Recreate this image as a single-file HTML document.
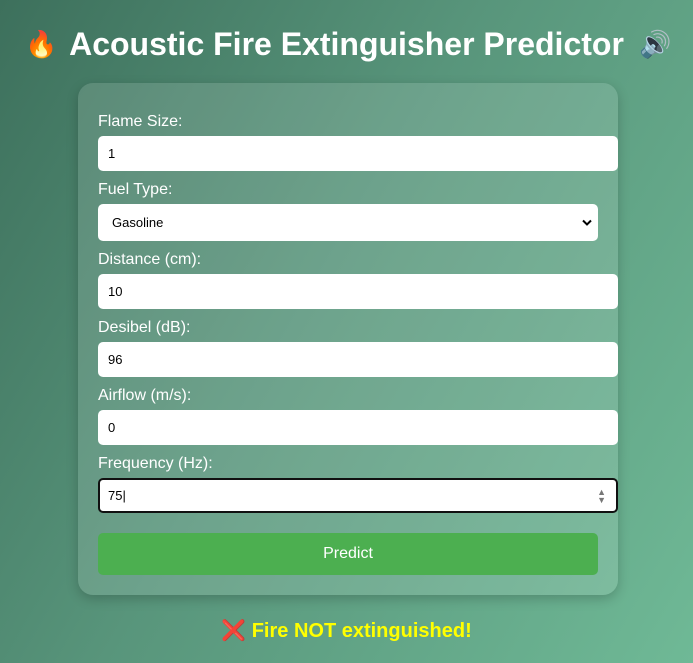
<!DOCTYPE html>
<html><head><style>
html,body{margin:0;height:663px;overflow:hidden}
body{width:693px;background:linear-gradient(120deg,#3d705c 0%,#58957b 45%,#6fb996 100%);font-family:"Liberation Sans",sans-serif;position:relative}
h1{position:absolute;top:25px;left:0;width:693px;text-align:center;margin:0;font-size:32px;color:#fff;font-weight:bold;line-height:38px;white-space:nowrap}
.emo{position:absolute;top:27px;font-size:26px;line-height:34px}
.card{position:absolute;left:78px;top:83px;width:540px;height:512px;background:rgba(255,255,255,0.13);border-radius:15px;box-shadow:0 4px 12px rgba(0,0,0,0.2)}
label{position:absolute;left:20px;color:#fff;font-size:16px}
.in{position:absolute;left:20px;width:520px;height:35px;background:#fff;border-radius:5px;box-sizing:border-box;font-size:13px;line-height:35px;padding-left:10px;color:#000}
.btn{position:absolute;left:20px;top:450px;width:500px;height:42px;background:#4caf50;border-radius:5px;color:#fff;font-size:16px;text-align:center;line-height:42px}
.res{position:absolute;top:618px;left:0;width:693px;text-align:center;color:#ffff00;font-weight:bold;font-size:20px}
</style></head><body>
<h1>Acoustic Fire Extinguisher Predictor</h1>
<span class="emo" style="left:25px">🔥</span><span class="emo" style="left:639px">🔊</span>
<div class="card">
<label style="top:30px">Flame Size:</label><div class="in" style="top:53px">1</div>
<label style="top:98px">Fuel Type:</label><div class="in" style="top:121px;width:500px;height:37px;line-height:37px;padding-left:14px">Gasoline<svg style="position:absolute;right:6px;top:15px" width="10" height="7" viewBox="0 0 10 7"><path d="M1 1.5L5 5.5L9 1.5" stroke="#000" stroke-width="2" fill="none"/></svg></div>
<label style="top:168px">Distance (cm):</label><div class="in" style="top:191px">10</div>
<label style="top:236px">Desibel (dB):</label><div class="in" style="top:259px">96</div>
<label style="top:304px">Airflow (m/s):</label><div class="in" style="top:327px">0</div>
<label style="top:372px">Frequency (Hz):</label><div class="in" style="top:395px;border:2px solid #111;padding-left:8px;line-height:31px">75|<span style="position:absolute;right:10px;top:0;color:#777;font-size:9px;line-height:8px;padding-top:8px">▲<br>▼</span></div>
<div class="btn">Predict</div>
</div>
<div class="res"><span style="color:#f0506e">❌</span> Fire NOT extinguished!</div>
</body></html>
